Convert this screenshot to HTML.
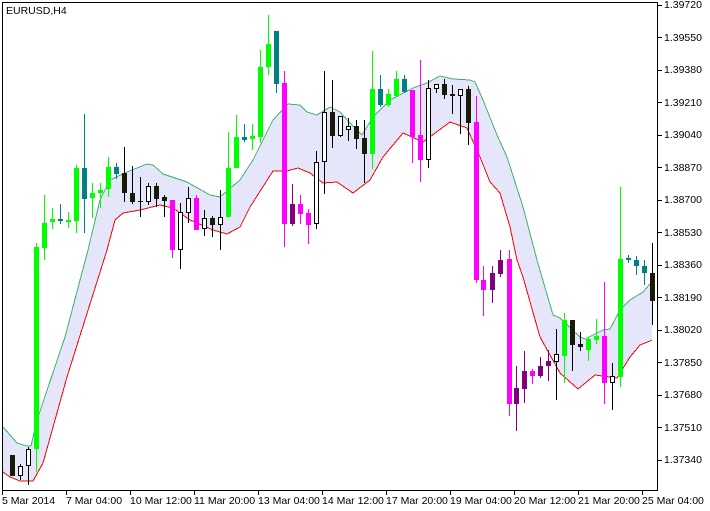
<!DOCTYPE html>
<html><head><meta charset="utf-8"><style>
html,body{margin:0;padding:0;background:#fff;}
svg{display:block;font-family:"Liberation Sans",sans-serif;font-size:10.5px;}
</style></head><body>
<svg id="s" width="710" height="511" viewBox="0 0 710 511" xmlns="http://www.w3.org/2000/svg" shape-rendering="crispEdges">
<rect x="0" y="0" width="710" height="511" fill="#fff"/>
<polygon id="band" fill="#e6e6fa"/>
<polyline id="up" fill="none" stroke="#3cb371" stroke-width="1"/>
<polyline id="lo" fill="none" stroke="#ff0000" stroke-width="1"/>
<g id="c"></g>
<rect x="2.5" y="2.5" width="655" height="488" fill="none" stroke="#000"/>
<text x="6" y="14" font-size="10.5">EURUSD,H4</text>
<g id="ax" stroke="#000"></g>
<g font-size="10.5">
<text x="664" y="8">1.39720</text>
<text x="664" y="41">1.39550</text>
<text x="664" y="73">1.39380</text>
<text x="664" y="106">1.39210</text>
<text x="664" y="138">1.39040</text>
<text x="664" y="171">1.38870</text>
<text x="664" y="203">1.38700</text>
<text x="664" y="236">1.38530</text>
<text x="664" y="268">1.38360</text>
<text x="664" y="301">1.38190</text>
<text x="664" y="333">1.38020</text>
<text x="664" y="366">1.37850</text>
<text x="664" y="398">1.37680</text>
<text x="664" y="431">1.37510</text>
<text x="664" y="463">1.37340</text>
<text x="2" y="504">5 Mar 2014</text>
<text x="66" y="504">7 Mar 04:00</text>
<text x="130" y="504">10 Mar 12:00</text>
<text x="194" y="504">11 Mar 20:00</text>
<text x="258" y="504">13 Mar 04:00</text>
<text x="322" y="504">14 Mar 12:00</text>
<text x="386" y="504">17 Mar 20:00</text>
<text x="450" y="504">19 Mar 04:00</text>
<text x="514" y="504">20 Mar 12:00</text>
<text x="578" y="504">21 Mar 20:00</text>
<text x="642" y="504">25 Mar 04:00</text>
</g>
</svg>
<script>
var NS="http://www.w3.org/2000/svg";
var up=[[3,427],[17,443],[27,446],[31,446],[37,420],[65,337],[88,250],[100,200],[110,180],[127,172],[147,164],[153,165],[163,174],[187,182],[210,195],[220,197],[240,180],[253,160],[273,120],[288,104],[300,105],[307,112],[317,115],[330,107],[340,112],[350,123],[362,135],[373,117],[390,100],[413,88],[427,83],[440,76],[453,79],[470,80],[475,82],[483,100],[497,135],[507,157],[523,207],[537,260],[553,315],[560,318],[580,337],[585,339],[603,330],[610,329],[620,310],[630,300],[643,292],[650,284],[652,282]];
var lo=[[3,472],[10,477],[20,481],[33,481],[43,463],[67,377],[107,250],[115,220],[123,213],[140,210],[160,205],[173,208],[190,220],[213,230],[227,234],[240,227],[250,207],[273,171],[287,171],[298,168],[310,173],[323,183],[337,182],[353,193],[370,180],[383,157],[403,133],[423,142],[450,122],[467,128],[480,157],[490,182],[500,193],[510,227],[517,260],[523,277],[540,337],[560,373],[578,389],[595,375],[617,378],[630,357],[640,345],[650,341],[652,340]];
function pts(a){return a.map(function(p){return p[0]+","+p[1]}).join(" ");}
document.getElementById("up").setAttribute("points",pts(up));
document.getElementById("lo").setAttribute("points",pts(lo));
document.getElementById("band").setAttribute("points",pts(up)+" "+pts(lo.slice().reverse()));
var C={g:"#00ff00",t:"#008080",m:"#ff00ff",p:"#800080",b:"#1a1a0a",h:"#fff"};
var d=[[10,455,476,455,476,"b"],[18,464,480,466,476,"h"],[26,447,485,449,466,"h"],[34,243,472,247,449,"g"],[42,195,260,223,248,"g"],[50,208,229,219,222,"g"],[58,204,224,219,221,"t"],[66,212,228,220,222,"g"],[74,165,233,168,221,"g"],[82,114,233,168,199,"t"],[90,183,218,193,198,"g"],[98,183,208,190,193,"g"],[106,157,197,167,189,"g"],[114,163,179,167,174,"t"],[122,147,202,173,193,"b"],[130,166,204,193,202,"b"],[138,177,217,201,202,"b"],[146,183,205,186,202,"h"],[154,183,207,186,199,"b"],[162,195,217,197,201,"b"],[170,200,258,200,250,"m"],[178,203,269,212,250,"h"],[186,187,223,198,213,"h"],[194,195,230,198,230,"m"],[202,210,236,218,229,"h"],[210,216,237,218,225,"b"],[218,190,250,217,225,"h"],[226,132,217,168,217,"g"],[234,115,168,137,168,"g"],[242,124,142,137,140,"t"],[250,124,150,136,139,"g"],[258,50,143,67,137,"g"],[266,15,75,44,67,"g"],[274,31,93,31,84,"t"],[282,71,247,83,224,"m"],[290,184,226,204,224,"p"],[298,195,224,204,214,"m"],[306,209,244,213,225,"m"],[314,151,229,162,224,"h"],[322,71,194,112,162,"h"],[330,80,148,112,136,"b"],[338,116,137,116,136,"h"],[346,118,141,126,130,"h"],[354,120,149,126,139,"b"],[362,120,183,138,154,"b"],[370,51,169,89,154,"g"],[378,75,107,89,105,"t"],[386,89,107,94,105,"g"],[394,71,97,79,96,"g"],[402,75,93,79,92,"t"],[410,90,163,90,137,"m"],[418,60,182,135,160,"m"],[426,80,168,88,160,"h"],[434,84,93,84,89,"h"],[442,79,99,84,95,"b"],[450,85,114,94,96,"b"],[458,89,134,89,96,"h"],[466,86,145,89,123,"b"],[474,96,283,122,280,"m"],[481,266,316,280,290,"m"],[490,266,303,273,290,"p"],[498,250,277,260,274,"p"],[507,250,416,259,404,"m"],[514,366,431,388,404,"p"],[522,351,403,371,389,"p"],[530,369,384,371,376,"m"],[538,357,378,366,376,"p"],[546,350,381,361,366,"p"],[554,329,400,354,362,"h"],[562,313,383,320,356,"g"],[570,320,371,320,345,"b"],[578,332,351,344,347,"b"],[586,338,361,339,350,"g"],[594,319,344,336,340,"g"],[602,282,404,336,383,"m"],[610,363,410,376,383,"h"],[618,187,387,259,377,"g"],[626,255,263,258,260,"t"],[634,256,275,260,266,"t"],[642,260,285,266,273,"t"],[650,243,325,273,301,"b"]];
var g=document.getElementById("c");
function el(n,a){var e=document.createElementNS(NS,n);for(var k in a)e.setAttribute(k,a[k]);g.appendChild(e);return e;}
d.forEach(function(c){
 var x=c[0],t=c[5];
 var wc=(t=="b"||t=="h")?"#000":C[t];
 el("rect",{x:x+2,y:c[1],width:1,height:c[2]-c[1],fill:wc});
 var h=Math.max(1,c[4]-c[3]);
 if(t=="h"){el("rect",{x:x+0.5,y:c[3]+0.5,width:4,height:Math.max(1,h-1),fill:"#fff",stroke:"#000"});}
 else el("rect",{x:x,y:c[3],width:5,height:h,fill:C[t]});
});
var ax=document.getElementById("ax");
function ln(x1,y1,x2,y2){var e=document.createElementNS(NS,"line");e.setAttribute("x1",x1);e.setAttribute("y1",y1);e.setAttribute("x2",x2);e.setAttribute("y2",y2);ax.appendChild(e);}
for(var i=0;i<15;i++){var y=4.5+i*32.5;y=Math.round(y)+0.5;ln(658,y,662,y);}
for(var j=0;j<11;j++){var x=2.5+j*64;ln(x,491,x,495);}
</script>
</body></html>
